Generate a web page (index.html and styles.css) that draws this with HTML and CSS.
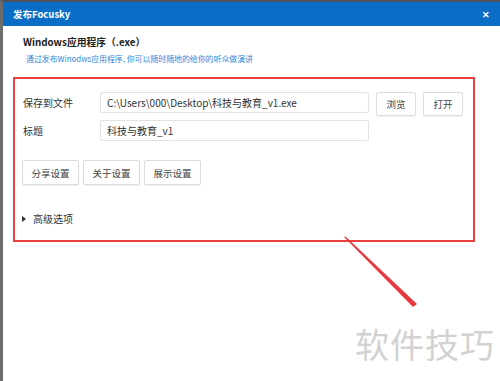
FILE: index.html
```html
<!DOCTYPE html>
<html lang="zh-CN">
<head>
  <meta charset="UTF-8">
  <meta name="viewport" content="width=device-width, initial-scale=1.0">
  <title>发布Focusky</title>
  <link rel="stylesheet" href="styles.css">
</head>
<body>
  <div class="screen">
    <!-- Title bar -->
    <header class="titlebar">
      <span class="titlebar-text">发布Focusky</span>
      <span class="close">&#x2715;</span>
    </header>

    <!-- Intro -->
    <div class="intro">
      <h2 class="intro-title">Windows应用程序（.exe）</h2>
      <p class="intro-desc">通过发布Winodws应用程序, 你可以随时随地的给你的听众做演讲</p>
    </div>

    <!-- Highlighted settings -->
    <div class="panel">
      <div class="row">
        <label class="row-label">保存到文件</label>
        <div class="field">C:\Users\000\Desktop\科技与教育_v1.exe</div>
        <button class="btn btn-small">浏览</button>
        <button class="btn btn-small">打开</button>
      </div>
      <div class="row">
        <label class="row-label">标题</label>
        <div class="field">科技与教育_v1</div>
      </div>

      <div class="tabs">
        <button class="btn btn-tab">分享设置</button>
        <button class="btn btn-tab">关于设置</button>
        <button class="btn btn-tab">展示设置</button>
      </div>

      <div class="advanced">
        <span class="caret"></span>
        <span>高级选项</span>
      </div>
    </div>

    <!-- Annotation arrow -->
    <svg class="arrow" width="500" height="381" viewBox="0 0 500 381">
      <polygon points="344,237 345.5,236.5 417,304 413,307" fill="#e8383d"/>
    </svg>

    <div class="watermark">软件技巧</div>
  </div>
</body>
</html>
```

FILE: styles.css
```css
body {
  margin: 0;
  font-family: "Noto Sans CJK SC", "Noto Sans", sans-serif;
  color: #333;
  background: #fff;
}
.screen {
  position: relative;
  height: 381px;
  box-sizing: border-box;
  border-top: 2px solid #4d535b;
  border-left: 3px solid #6d6d6d;
  overflow: hidden;
}
.titlebar {
  height: 24px;
  background: #0a6ec6;
  color: #fff;
  display: flex;
  justify-content: space-between;
  align-items: center;
  padding: 0 10px;
}
.titlebar-text {
  font-size: 9.5px;
  font-weight: bold;
}
.close {
  font-size: 9px;
  font-weight: bold;
}
.intro {
  padding: 9px 0 0 20px;
}
.intro-title {
  margin: 0;
  font-size: 9.8px;
  line-height: 14px;
  font-weight: 600;
  color: #222;
}
.intro-desc {
  margin: 3px 0 0 3px;
  font-size: 7.9px;
  line-height: 14px;
  color: #2f86d8;
}
.panel {
  margin: 11px 0 0 10px;
  width: 462px;
  height: 165px;
  box-sizing: border-box;
  border: 2px solid #e8413f;
  padding: 13px 0 0 8px;
}
.row {
  display: flex;
  align-items: flex-start;
  margin-bottom: 4px;
}
.row-label {
  width: 77px;
  height: 21px;
  line-height: 21px;
  font-size: 10px;
}
.field {
  width: 269px;
  height: 21px;
  box-sizing: border-box;
  border: 1px solid #e2e2e2;
  border-radius: 2px;
  padding-left: 6px;
  line-height: 19px;
  font-size: 10px;
  color: #333;
}
.btn {
  font-family: inherit;
  background: #fff;
  border: 1px solid #dcdcdc;
  border-radius: 2px;
  box-shadow: 0 1px 1px rgba(0, 0, 0, 0.06);
  color: #444;
  font-size: 9.5px;
  padding: 0;
  cursor: pointer;
}
.btn-small {
  width: 40px;
  height: 24px;
  margin-left: 7px;
}
.tabs {
  display: flex;
  gap: 4px;
  margin: 19px 0 0 -1px;
}
.btn-tab {
  width: 57px;
  height: 25px;
}
.advanced {
  display: flex;
  align-items: center;
  margin-top: 27px;
  font-size: 10px;
  line-height: 14px;
}
.caret {
  width: 0;
  height: 0;
  border-top: 3px solid transparent;
  border-bottom: 3px solid transparent;
  border-left: 4px solid #333;
  margin: 0 7px 0 -1px;
}
.arrow {
  position: absolute;
  left: -3px;
  top: -2px;
  pointer-events: none;
}
.watermark {
  position: absolute;
  left: 352px;
  top: 318px;
  font-size: 34px;
  line-height: 48px;
  color: #d2d2d2;
  letter-spacing: 1px;
}
```
